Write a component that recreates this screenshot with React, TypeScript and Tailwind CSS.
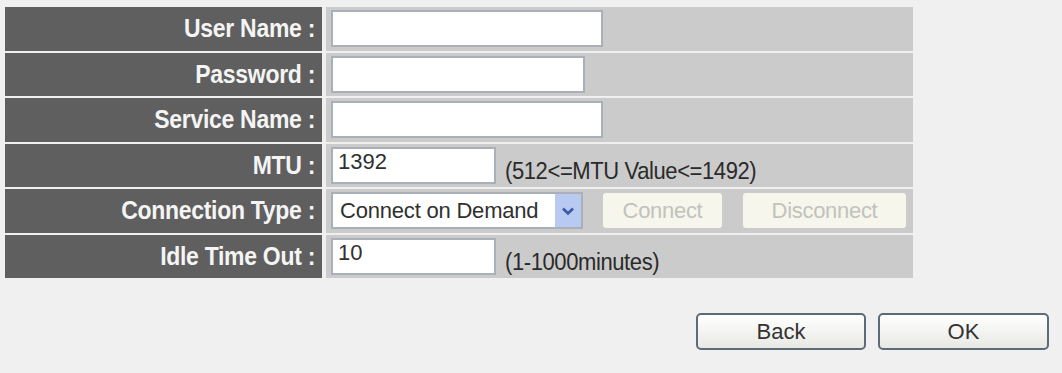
import React from 'react';

const labelCls =
  "bg-[#5f5f5f] text-[#f4f4f4] font-bold text-[23px] flex items-center justify-end pr-[7px] leading-none tracking-[-0.3px]";
const valueCls = "bg-[#cbcbcb] flex items-center pl-[5px]";
const inputCls =
  "h-[37px] bg-white border-2 border-[#a9b0b7] px-[5px] text-[22px] text-[#303030] outline-none leading-none";

const Row: React.FC<{ label: string; children: React.ReactNode }> = ({ label, children }) => (
  <>
    <div className={labelCls}>
      <span className="inline-block scale-y-[1.12]">{label}</span>
    </div>
    <div className={valueCls}>{children}</div>
  </>
);

const App: React.FC = () => {
  return (
    <div
      className="w-[1062px] h-[373px] bg-[#f0f0f0] pl-[5px] pt-[7px] overflow-hidden"
      style={{ fontFamily: '"Liberation Sans", Arial, sans-serif' }}
    >
      <div className="grid grid-cols-[317px_587px] auto-rows-[43.5px] gap-x-[4px] gap-y-[2px] w-[908px]">
        <Row label="User Name :">
          <input className={`${inputCls} w-[272px]`} defaultValue="" />
        </Row>
        <Row label="Password :">
          <input type="password" className={`${inputCls} w-[254px]`} defaultValue="" />
        </Row>
        <Row label="Service Name :">
          <input className={`${inputCls} w-[272px]`} defaultValue="" />
        </Row>
        <Row label="MTU :">
          <input className={`${inputCls} w-[165px] pb-[6px]`} defaultValue="1392" />
          <span className="ml-[9px] pt-[10px] text-[22px] text-[#2a2a2a] tracking-[-0.4px] inline-block scale-y-[1.1]">
            (512&lt;=MTU Value&lt;=1492)
          </span>
        </Row>
        <Row label="Connection Type :">
          <div className="h-[37px] w-[252px] bg-white border-2 border-[#a9b0b7] flex items-center">
            <span className="flex-1 pl-[7px] text-[22px] text-[#303030] tracking-[-0.2px] whitespace-nowrap">
              Connect on Demand
            </span>
            <span className="h-full w-[26px] bg-[#b9caf2] flex items-center justify-center">
              <svg width="14" height="10" viewBox="0 0 14 10">
                <path d="M2 2.5 L7 7.5 L12 2.5" fill="none" stroke="#3a5aa8" strokeWidth="2.6" />
              </svg>
            </span>
          </div>
          <button
            disabled
            className="ml-[20px] h-[35px] w-[119px] bg-[#f6f6ec] rounded-[3px] text-[22px] text-[#c2c2bc] tracking-[-0.3px]"
          >
            Connect
          </button>
          <button
            disabled
            className="ml-[21px] h-[35px] w-[163px] bg-[#f6f6ec] rounded-[3px] text-[22px] text-[#c2c2bc] tracking-[-0.3px]"
          >
            Disconnect
          </button>
        </Row>
        <Row label="Idle Time Out :">
          <input className={`${inputCls} w-[165px] pb-[6px]`} defaultValue="10" />
          <span className="ml-[9px] pt-[10px] text-[22px] text-[#2a2a2a] tracking-[-0.4px] inline-block scale-y-[1.1]">
            (1-1000minutes)
          </span>
        </Row>
      </div>
      <div className="flex justify-end gap-[12px] w-[1044px] mt-[35px]">
        <button className="h-[37px] w-[170px] rounded-[5px] border-2 border-[#5d6b78] bg-gradient-to-b from-white to-[#e8e8e4] text-[22px] text-[#333]">
          Back
        </button>
        <button className="h-[37px] w-[171px] rounded-[5px] border-2 border-[#5d6b78] bg-gradient-to-b from-white to-[#e8e8e4] text-[22px] text-[#333]">
          OK
        </button>
      </div>
    </div>
  );
};

export default App;
